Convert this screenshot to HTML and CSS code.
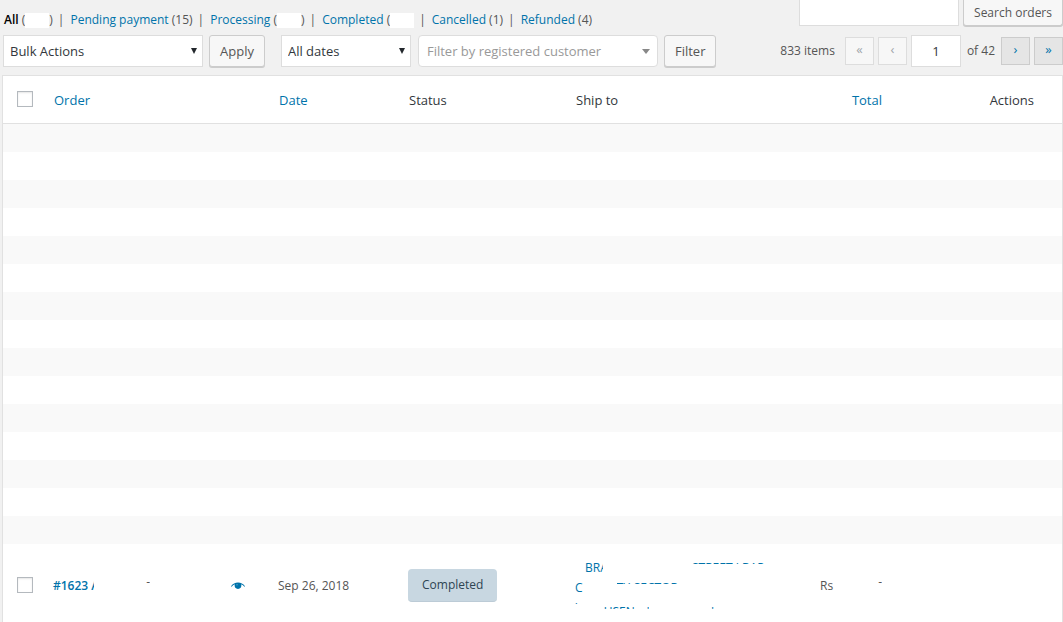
FILE: index.html
```
<!DOCTYPE html>
<html lang="en">
<head>
  <meta charset="UTF-8">
  <meta name="viewport" content="width=device-width, initial-scale=1.0">
  <title>Orders</title>
  <link rel="stylesheet" href="styles.css">
</head>
<body>
  <div class="wrap">
    <div class="top-bar">
      <ul class="subsubsub">
        <li><a href="#" class="current">All</a> <span class="count">(<span class="hidden-count"></span>)</span></li>
        <li><a href="#">Pending payment</a> <span class="count">(15)</span></li>
        <li><a href="#">Processing</a> <span class="count">(<span class="hidden-count"></span>)</span></li>
        <li><a href="#">Completed</a> <span class="count">(<span class="hidden-count"></span></span></li>
        <li><a href="#">Cancelled</a> <span class="count">(1)</span></li>
        <li><a href="#">Refunded</a> <span class="count">(4)</span></li>
      </ul>
      <form class="search-box">
        <input type="search" class="search-input" aria-label="Search orders">
        <button type="button" class="button search-button">Search orders</button>
      </form>
    </div>

    <div class="tablenav">
      <div class="select-box bulk">
        <select aria-label="Select bulk action"><option>Bulk Actions</option></select>
      </div>
      <button type="button" class="button">Apply</button>
      <div class="select-box dates">
        <select aria-label="Filter by date"><option>All dates</option></select>
      </div>
      <div class="select-box customer">
        <select aria-label="Customer"><option>Filter by registered customer</option></select>
      </div>
      <button type="button" class="button">Filter</button>

      <div class="pagination">
        <span class="items">833 items</span>
        <button type="button" class="page-button" aria-label="First page" disabled>«</button>
        <button type="button" class="page-button" aria-label="Previous page" disabled>‹</button>
        <input type="text" class="page-input" value="1" aria-label="Current page">
        <span class="of">of 42</span>
        <button type="button" class="page-button" aria-label="Next page">›</button>
        <button type="button" class="page-button" aria-label="Last page">»</button>
      </div>
    </div>

    <table class="orders">
      <colgroup>
        <col class="col-check">
        <col class="col-order">
        <col class="col-date">
        <col class="col-status">
        <col class="col-ship">
        <col class="col-total">
        <col class="col-actions">
      </colgroup>
      <thead>
        <tr>
          <th class="check"><input type="checkbox" aria-label="Select all"></th>
          <th><a href="#">Order</a></th>
          <th><a href="#">Date</a></th>
          <th>Status</th>
          <th>Ship to</th>
          <th class="total"><a href="#">Total</a></th>
          <th class="actions">Actions</th>
        </tr>
      </thead>
      <tbody>
        <tr><td colspan="7"></td></tr>
        <tr><td colspan="7"></td></tr>
        <tr><td colspan="7"></td></tr>
        <tr><td colspan="7"></td></tr>
        <tr><td colspan="7"></td></tr>
        <tr><td colspan="7"></td></tr>
        <tr><td colspan="7"></td></tr>
        <tr><td colspan="7"></td></tr>
        <tr><td colspan="7"></td></tr>
        <tr><td colspan="7"></td></tr>
        <tr><td colspan="7"></td></tr>
        <tr><td colspan="7"></td></tr>
        <tr><td colspan="7"></td></tr>
        <tr><td colspan="7"></td></tr>
        <tr><td colspan="7"></td></tr>
        <tr class="order-row">
          <td class="check"><input type="checkbox" aria-label="Select order 1623"></td>
          <td>
            <div class="order-cell">
              <a href="#" class="order-number">#1623 <span class="cut cut-initial">A</span></a>
              <span class="cut cut-tip">-</span>
              <a href="#" class="preview" aria-label="Preview">
                <svg width="14" height="8" viewBox="0 0 14 8">
                  <path d="M0 4.200C1.800 1.800 4.200.6 7 .6s5.200 1.200 7 3.600l-.6.6C12.500 3.700 11.500 2.900 10.300 2.300c.5 2.800-1 4.700-3.300 4.700S3.200 5.100 3.700 2.300C2.500 2.900 1.500 3.700.6 4.800z" fill="#0073aa"/>
                  <circle cx="6" cy="2.700" r=".8" fill="#4fa0c8"/>
                </svg>
              </a>
            </div>
          </td>
          <td>Sep 26, 2018</td>
          <td><mark class="order-status">Completed</mark></td>
          <td>
            <a href="#" class="address">
              <span class="line"><span class="cut cut-name">BRA</span><span class="cut cut-street">STREET J BAP</span></span>
              <span class="line"><span>C</span><span class="cut cut-sector">TY-SECTOR</span></span>
              <span class="line"><span class="cut cut-dot">'</span><span class="cut cut-city">USEN</span><span class="cut cut-comma">'</span><span class="cut cut-end">'</span></span>
            </a>
          </td>
          <td><div class="amount"><span>Rs</span><span class="cut cut-tip">-</span></div></td>
          <td></td>
        </tr>
      </tbody>
    </table>
  </div>
</body>
</html>
```
FILE: styles.css
```
* {
  box-sizing: border-box;
}
body {
  margin: 0;
  background: #f1f1f1;
  color: #555;
  font-family: "Open Sans", "Noto Sans", sans-serif;
  font-size: 12px;
  line-height: 20px;
}
a {
  color: #0073aa;
  text-decoration: none;
}
input,
select,
button {
  font-family: inherit;
  font-size: 13px;
  margin: 0;
}
.wrap {
  padding-left: 2px;
}

/* Status links and search */
.top-bar {
  display: flex;
  justify-content: space-between;
  align-items: flex-start;
  height: 35px;
}
.subsubsub {
  display: flex;
  list-style: none;
  margin: 0;
  padding: 10px 0 0 2px;
}
.subsubsub li + li::before {
  content: "|";
  margin: 0 6px 0 5px;
}
.subsubsub .current {
  color: #000;
  font-weight: 600;
}
.hidden-count {
  display: inline-block;
  width: 24px;
  height: 15px;
  background: #fff;
  vertical-align: middle;
}
.search-box {
  display: flex;
  align-items: flex-start;
  gap: 4px;
}
.search-input {
  width: 160px;
  height: 26px;
  border: 1px solid #ddd;
  border-top: 0;
  background: #fff;
}
.button {
  height: 32px;
  padding: 0 10px;
  border: 1px solid #ccc;
  border-radius: 3px;
  background: #f7f7f7;
  box-shadow: 0 1px 0 #ccc;
  color: #555;
  cursor: pointer;
}
.search-button {
  height: 26px;
  border-top: 0;
  border-radius: 0 0 3px 3px;
  font-size: 12px;
}

/* Bulk actions, filters, paging */
.tablenav {
  display: flex;
  align-items: center;
  height: 32px;
  margin-bottom: 8px;
  padding-left: 1px;
}
.select-box {
  position: relative;
  height: 32px;
}
.select-box select {
  appearance: none;
  width: 100%;
  height: 100%;
  padding: 0 6px;
  border: 1px solid #ddd;
  border-radius: 0;
  background: #fff;
  color: #32373c;
}
.select-box::after {
  content: "";
  position: absolute;
  top: 13px;
  right: 6px;
  border: 3px solid transparent;
  border-top: 6px solid #23282d;
  border-bottom: 0;
  pointer-events: none;
}
.bulk {
  width: 200px;
  margin-right: 6px;
}
.dates {
  width: 130px;
  margin-left: 16px;
  margin-right: 7px;
}
.customer {
  width: 240px;
  margin-right: 6px;
}
.select-box.customer select {
  padding: 0 8px;
  border-radius: 4px;
  color: #999;
}
.select-box.customer::after {
  top: 14px;
  right: 8px;
  border-width: 5px 4px 0;
  border-top-color: #888;
}
.pagination {
  display: flex;
  align-items: center;
  margin-left: auto;
}
.items {
  margin-right: 10px;
}
.page-button {
  width: 29px;
  height: 28px;
  margin-right: 4px;
  padding: 0 0 4px;
  border: 1px solid #ccc;
  background: #e5e5e5;
  color: #0073aa;
}
.page-button:last-child {
  margin-right: 0;
}
.page-button:disabled {
  border-color: #ddd;
  background: #f7f7f7;
  color: #a0a5aa;
}
.page-input {
  width: 50px;
  height: 32px;
  border: 1px solid #ddd;
  background: #fff;
  color: #32373c;
  text-align: center;
}
.of {
  margin: 0 6px;
}

/* Orders table */
.orders {
  width: 100%;
  table-layout: fixed;
  border: 1px solid #e1e1e1;
  border-bottom: 0;
  border-spacing: 0;
  background: #fff;
}
.col-check { width: 41px; }
.col-date { width: 130px; }
.col-status { width: 167px; }
.col-ship { width: 245px; }
.col-total { width: 81px; }
.col-actions { width: 170px; }
th {
  height: 48px;
  padding: 0 10px;
  border-bottom: 1px solid #e1e1e1;
  color: #32373c;
  font-size: 13px;
  font-weight: 400;
  text-align: left;
}
td {
  height: 28px;
  padding: 0 10px 0 9px;
}
tbody tr:nth-child(odd) {
  background: #f9f9f9;
}
.check {
  padding: 0 0 2px 14px;
}
.check input {
  appearance: none;
  display: block;
  width: 16px;
  height: 16px;
  border: 1px solid #b4b9be;
  background: #fff;
  box-shadow: inset 0 1px 2px rgba(0, 0, 0, 0.1);
}
th.total {
  text-align: right;
}
th.actions {
  padding-right: 28px;
  text-align: right;
}
.order-row td {
  height: 80px;
  padding-top: 3px;
}
.order-cell {
  display: flex;
  align-items: center;
}
.order-number {
  font-weight: 600;
}
.preview {
  display: flex;
  margin-left: auto;
  margin-right: 14px;
}
.order-status {
  display: inline-block;
  padding: 6px 14px;
  border-bottom: 1px solid #bccbd6;
  border-radius: 4px;
  background: #c8d7e1;
  color: #2e4453;
}
.address {
  display: block;
  padding-top: 4px;
}
.line {
  display: flex;
  height: 20px;
}
.amount {
  display: flex;
  justify-content: space-between;
}

/* Partly covered text: only a part of each line shows */
.cut {
  display: inline-block;
  overflow: hidden;
  white-space: nowrap;
}
.cut-initial {
  width: 3px;
  height: 20px;
  vertical-align: top;
}
.cut-tip {
  height: 20px;
  line-height: 12px;
}
.order-cell .cut-tip {
  margin-left: 52px;
}
.cut-name {
  width: 18px;
  margin-left: 10px;
}
.cut-street {
  height: 6px;
  margin-left: 89px;
}
.cut-sector {
  height: 6px;
  margin-left: 34px;
}
.cut-dot {
  height: 6px;
}
.cut-city,
.cut-comma,
.cut-end {
  height: 7px;
  margin-top: 4px;
}
.cut-city {
  margin-left: 26px;
}
.cut-comma {
  margin-left: 12px;
}
.cut-end {
  margin-left: 62px;
}
```
